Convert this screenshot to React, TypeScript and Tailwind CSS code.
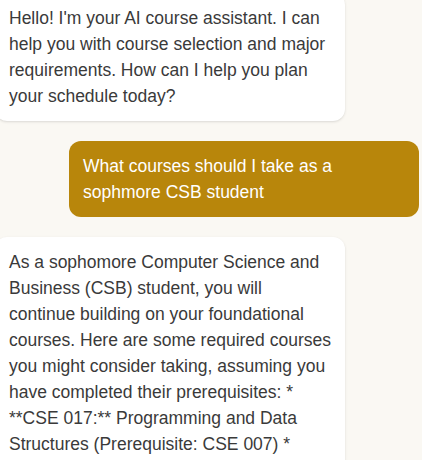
const messages = [
  {
    role: "assistant",
    text: "Hello! I'm your AI course assistant. I can help you with course selection and major requirements. How can I help you plan your schedule today?",
  },
  {
    role: "user",
    text: "What courses should I take as a sophmore CSB student",
  },
  {
    role: "assistant",
    text: "As a sophomore Computer Science and Business (CSB) student, you will continue building on your foundational courses. Here are some required courses you might consider taking, assuming you have completed their prerequisites: * **CSE 017:** Programming and Data Structures (Prerequisite: CSE 007) * **CSE 140:** Foundations of Discrete Structures and Algorithms * **ACCT 151:** Introduction to Financial Accounting * **ECO 001:** Principles of Economics",
  },
];

export default function App() {
  return (
    <div className="h-[460px] overflow-hidden bg-[#faf8f3] font-['Liberation_Sans',Arial,sans-serif]">
      <div className="-mt-[7px] -ml-[5px] flex w-[424px] flex-col gap-5">
        {messages.map((m, i) =>
          m.role === "user" ? (
            <div key={i} className="flex justify-end">
              <div className="max-w-[350px] rounded-xl bg-[#b8860b] px-3.5 py-3 text-[17.5px] leading-[26px] text-white">
                {m.text}
              </div>
            </div>
          ) : (
            <div key={i} className="flex justify-start">
              <div className="max-w-[350px] rounded-xl bg-white px-3.5 py-3 text-[17.5px] leading-[26px] text-[#3a3a3a] shadow-sm">
                {m.text}
              </div>
            </div>
          )
        )}
      </div>
    </div>
  );
}
